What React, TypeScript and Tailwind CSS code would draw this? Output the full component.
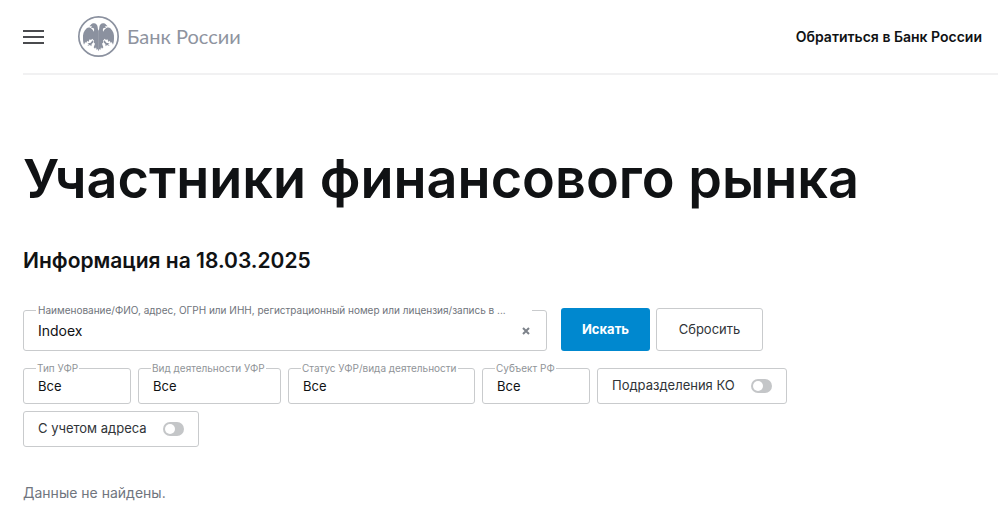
import React, { useState } from 'react';

interface SelectFieldProps {
  id: string;
  label: string;
  className: string;
}

interface ToggleProps {
  label: string;
}

function EagleLogo() {
  return (
    <svg className="size-[41px] shrink-0" viewBox="0 0 123 123" fill="none" aria-hidden="true">
      <circle cx="61.5" cy="61.5" r="59" stroke="#8b919f" strokeWidth="5" />
      {/* half of the eagle, mirrored for the other side */}
      {[false, true].map(flip => (
        <g key={String(flip)} transform={flip ? 'translate(123 0) scale(-1 1)' : undefined} fill="#8b919f">
          <path d="M62 45 C60 42 59 38 59 34 C59 27 54 22 48 22 C43 22 40 24 38 27 L34 31 L42 31 L39 35 L46 36 C49 39 49 43 47 47 C45 43 42 38 38 36 C34 34 29 34 26 37 C17 45 14 55 15 67 C15 75 16 81 18 86 L22 77 L24 82 L28 74 L31 78 L35 70 L39 72 L43 68 L48 74 L48 80 L51 83 L47 94 L51 98 L54 94 L56 102 L59 99 L62 106 Z" />
          <path d="M44 73 L37 81 L28 81 L33 84 L28 90 L36 87 L40 91 L41 84 L47 78 Z" />
        </g>
      ))}
    </svg>
  );
}

function SelectField({ id, label, className }: SelectFieldProps) {
  return (
    <fieldset className={`h-[42px] min-w-0 rounded-[3px] border border-[#c9cbcd] ${className}`}>
      <legend className="ml-3 h-3 px-px text-[10px] leading-3 whitespace-nowrap text-[#909498]">
        <label htmlFor={id}>{label}</label>
      </legend>
      <select id={id} className="block h-6 w-full appearance-none bg-transparent px-3.5 text-[13px] leading-6 text-[#101214] outline-none">
        <option>Все</option>
      </select>
    </fieldset>
  );
}

function Toggle({ label }: ToggleProps) {
  return (
    <label className="flex h-9 cursor-pointer items-center gap-4 rounded-[3px] border border-[#c9cbcd] px-3.5 text-[13px] text-[#303438]">
      {label}
      <input
        type="checkbox"
        role="switch"
        className="h-3.5 w-[21px] appearance-none rounded-full bg-[#c4c6c8] p-0.5 before:block before:size-2.5 before:rounded-full before:bg-white checked:bg-[#0088cf] checked:before:ml-[7px]"
      />
    </label>
  );
}

export default function App() {
  const [query, setQuery] = useState('Indoex');

  return (
    <div className="min-h-screen bg-white pl-[23px] font-['Inter','Liberation_Sans',sans-serif] text-[#101214]">
      <header className="flex h-[75px] items-center border-b-2 border-[#f1f1f2] pr-4">
        <button type="button" aria-label="Меню" className="flex w-[21px] flex-col gap-1">
          <span className="h-0.5 w-full bg-[#4a4b4e]" />
          <span className="h-0.5 w-full bg-[#4a4b4e]" />
          <span className="h-0.5 w-full bg-[#4a4b4e]" />
        </button>
        <a href="#" className="ml-[34px] flex items-center gap-2 font-['Lato',sans-serif] text-xl text-[#8f949f]">
          <EagleLogo />
          <span className="pb-0.5">Банк России</span>
        </a>
        <a href="#" className="ml-auto text-sm font-semibold">
          Обратиться в Банк России
        </a>
      </header>

      <main className="pr-8">
        <h1 className="mt-[72px] text-[54px] leading-[64px] font-semibold">Участники финансового рынка</h1>
        <h2 className="mt-9 text-[21px] leading-7 font-semibold">Информация на 18.03.2025</h2>

        <form className="mt-[29px]" onSubmit={e => e.preventDefault()}>
          <div className="flex max-w-[740px] items-end">
            <fieldset className="h-[47px] min-w-0 flex-1 rounded-[3px] border border-[#c9cbcd]">
              <legend className="ml-3 h-3 w-[496px] max-w-[95%] truncate px-0.5 text-[10px] leading-3 text-[#6f747b]">
                <label htmlFor="query">
                  Наименование/ФИО, адрес, ОГРН или ИНН, регистрационный номер или лицензия/запись в ...
                </label>
              </legend>
              <div className="flex h-[30px] items-center px-3.5">
                <input
                  id="query"
                  type="text"
                  value={query}
                  onChange={e => setQuery(e.target.value)}
                  className="min-w-0 flex-1 text-sm outline-none"
                />
                <button type="button" aria-label="Очистить" onClick={() => setQuery('')} className="px-0.5">
                  <svg className="size-2" viewBox="0 0 8 8" stroke="#7d828a" strokeWidth="2">
                    <path d="M1 1 L7 7 M7 1 L1 7" />
                  </svg>
                </button>
              </div>
            </fieldset>
            <button type="submit" className="ml-3.5 h-[43px] w-[89px] rounded-[3px] bg-[#0088cf] text-[13px] font-bold text-white">
              Искать
            </button>
            <button
              type="reset"
              onClick={() => setQuery('')}
              className="ml-1.5 h-[43px] w-[107px] rounded-[3px] border border-[#c9cbcd] text-[13px] text-[#303438]"
            >
              Сбросить
            </button>
          </div>

          <div className="mt-[11px] flex flex-wrap items-end gap-[7px]">
            <SelectField id="type" label="Тип УФР" className="w-[108px]" />
            <SelectField id="activity" label="Вид деятельности УФР" className="w-[143px]" />
            <SelectField id="status" label="Статус УФР/вида деятельности" className="w-[187px]" />
            <SelectField id="region" label="Субъект РФ" className="w-[108px]" />
            <Toggle label="Подразделения КО" />
            <Toggle label="С учетом адреса" />
          </div>
        </form>

        <p className="mt-9 text-sm leading-5 text-[#70757e]">Данные не найдены.</p>
      </main>
    </div>
  );
}
